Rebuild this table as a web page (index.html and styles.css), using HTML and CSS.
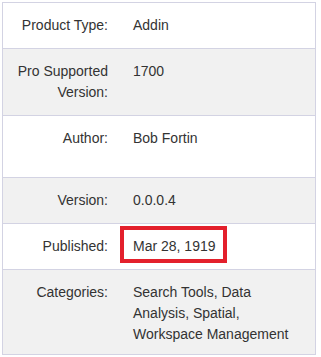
FILE: index.html
```html
<!DOCTYPE html>
<html lang="en">
<head>
    <meta charset="UTF-8">
    <meta name="viewport" content="width=device-width, initial-scale=1.0">
    <title>Add-in Details</title>
    <link rel="stylesheet" href="styles.css">
</head>
<body>
    <table class="details">
        <tr>
            <td class="label">Product Type:</td>
            <td class="value">Addin</td>
        </tr>
        <tr class="alt">
            <td class="label">Pro Supported Version:</td>
            <td class="value">1700</td>
        </tr>
        <tr class="author">
            <td class="label">Author:</td>
            <td class="value">Bob Fortin</td>
        </tr>
        <tr class="alt">
            <td class="label">Version:</td>
            <td class="value">0.0.0.4</td>
        </tr>
        <tr>
            <td class="label">Published:</td>
            <td class="value"><span class="highlight">Mar 28, 1919</span></td>
        </tr>
        <tr class="alt last">
            <td class="label">Categories:</td>
            <td class="value">Search Tools, Data Analysis, Spatial, Workspace Management</td>
        </tr>
    </table>
</body>
</html>
```

FILE: styles.css
```css
body {
    margin: 0;
    padding: 2px 0 0 2px;
    background-color: white;
    font-family: 'Liberation Sans', Arial, sans-serif;
    font-size: 14px;
    color: #333;
}
.details {
    width: 314px;
    border-collapse: collapse;
    border: 1px solid #d3d3e3;
}
.details td {
    padding: 12px;
    line-height: 21px;
    vertical-align: top;
    border-bottom: 1px solid #d3d3e3;
}
.label {
    width: 93px;
    padding-right: 13px !important;
    text-align: right;
}
.value {
    padding-left: 12px !important;
}
.alt td {
    background-color: #f1f1f1;
}
.author td {
    padding-bottom: 28px;
}
.last td {
    padding-bottom: 9px;
}
.highlight {
    position: relative;
}
.highlight::after {
    content: "";
    position: absolute;
    left: -13px;
    right: -11px;
    top: -12px;
    bottom: -9px;
    border: 4px solid #e3202c;
}
```
